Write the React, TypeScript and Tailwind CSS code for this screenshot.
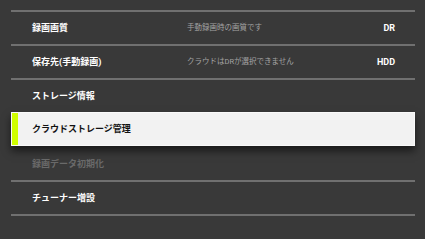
const rows = [
  { title: "録画画質", note: "手動録画時の画質です", value: "DR" },
  { title: "保存先(手動録画)", note: "クラウドはDRが選択できません", value: "HDD" },
  { title: "ストレージ情報" },
  { title: "クラウドストレージ管理", selected: true },
  { title: "録画データ初期化", disabled: true },
  { title: "チューナー増設" },
];

export default function App() {
  return (
    <div
      className="w-[425px] h-[239px] bg-[#393939] pt-[10px] pl-[11px] pr-[10px] overflow-hidden"
      style={{ fontFamily: 'Roboto, "Noto Sans CJK JP", sans-serif' }}
    >
      {rows.map((row, i) => {
        if (row.selected) {
          return (
            <div
              key={row.title}
              className="relative z-10 flex h-[34px] items-center bg-[#f2f2f2] border border-[#fafafa] shadow-[0_5px_8px_rgba(0,0,0,0.55)]"
            >
              <div className="h-full w-[6px] bg-[#d0ff00]" />
              <span className="pl-[14px] text-[9px] font-bold leading-none text-[#111]">
                {row.title}
              </span>
            </div>
          );
        }
        const afterSelected = i > 0 && rows[i - 1].selected;
        return (
          <div
            key={row.title}
            className={
              afterSelected
                ? "flex h-[34px] items-center pt-[2px]"
                : "flex h-[34px] items-center border-t-2 border-[#707070]"
            }
          >
            <span
              className={
                row.disabled
                  ? "w-[176px] shrink-0 pl-[21px] text-[9px] font-bold leading-none text-[#6a6a6a]"
                  : "w-[176px] shrink-0 pl-[21px] text-[9px] font-bold leading-none text-white"
              }
            >
              {row.title}
            </span>
            <span className="flex-1 text-[7.5px] leading-none text-[#a3a3a3]">{row.note}</span>
            {row.value && (
              <span className="pr-[20px] text-[9px] font-bold leading-none text-white">{row.value}</span>
            )}
          </div>
        );
      })}
      <div className="border-t-2 border-[#707070]" />
    </div>
  );
}
